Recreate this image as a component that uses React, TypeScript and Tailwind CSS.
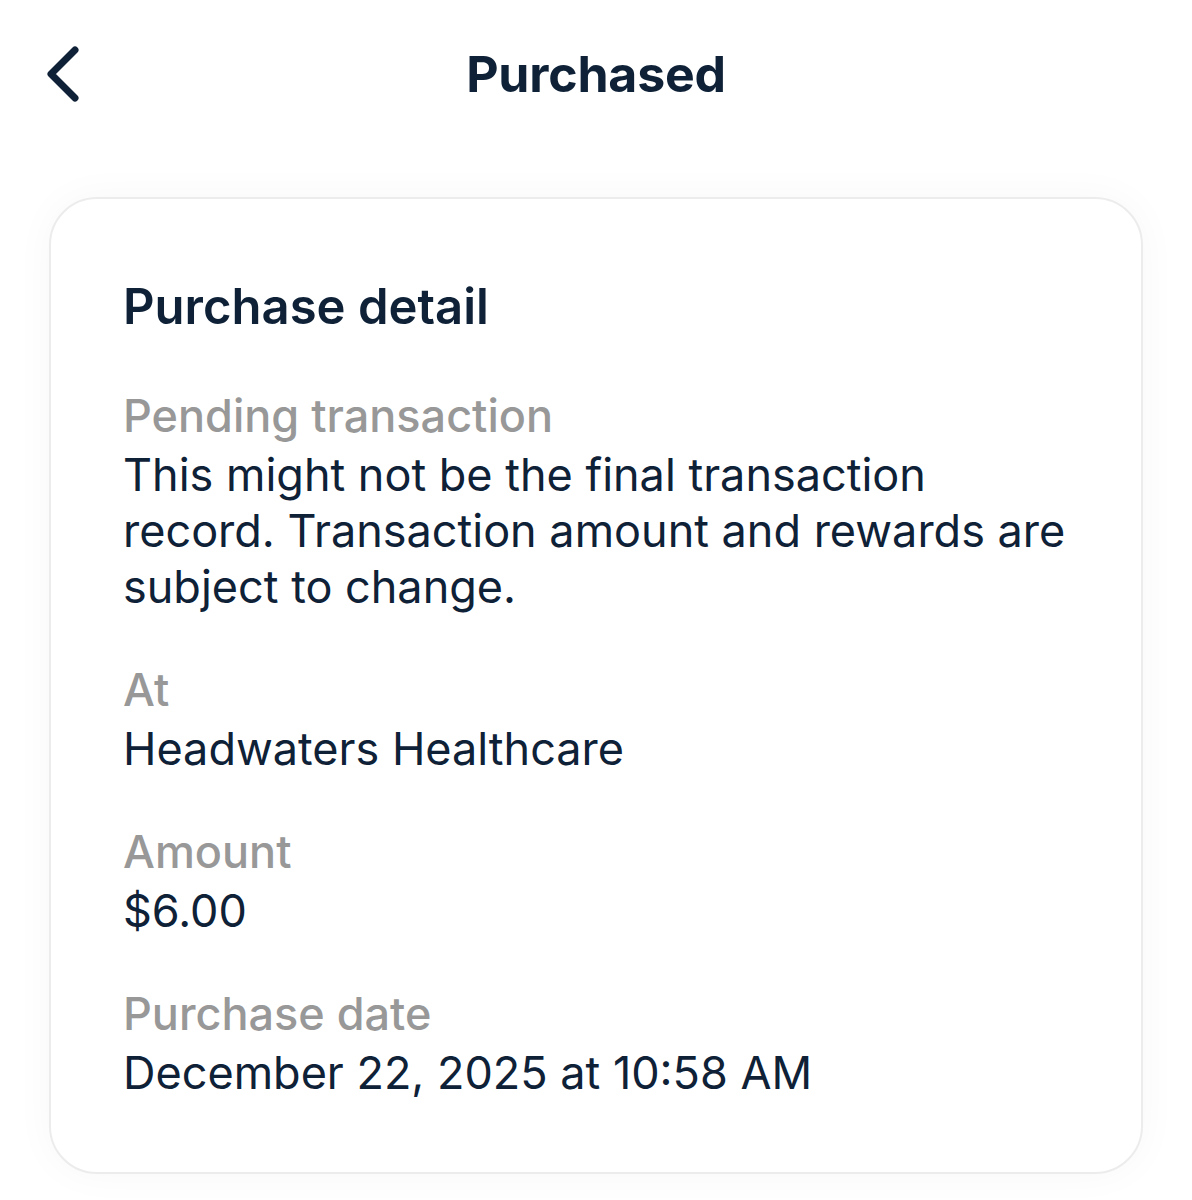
import React from "react";

const rows = [
  {
    label: "Pending transaction",
    value:
      "This might not be the final transaction record. Transaction amount and rewards are subject to change.",
  },
  { label: "At", value: "Headwaters Healthcare" },
  { label: "Amount", value: "$6.00" },
  { label: "Purchase date", value: "December 22, 2025 at 10:58 AM" },
];

export default function App() {
  return (
    <div
      className="min-h-[1200px] w-[1192px] bg-white text-[#0e2137]"
      style={{ fontFamily: "Inter, 'Noto Sans', sans-serif" }}
    >
      <header className="relative flex h-[150px] items-start justify-center pt-[42px]">
        <button className="absolute left-[41px] top-[39px] p-1" aria-label="Back">
          <svg width="40" height="64" viewBox="0 0 40 64" fill="none">
            <path
              d="M30 7 L6 31 L30 55"
              stroke="#0e2137"
              strokeWidth="7"
              strokeLinecap="round"
              strokeLinejoin="round"
            />
          </svg>
        </button>
        <h1 className="text-[50px] font-bold leading-[64px] tracking-[-0.2px]">Purchased</h1>
      </header>

      <div className="px-[49px] pt-[47px] pb-[28px]">
        <div className="rounded-[48px] border-2 border-[#ececec] bg-white pl-[72px] pr-[60px] pt-[80px] pb-[71px] shadow-[0_0_40px_rgba(0,0,0,0.035)]">
          <h2 className="text-[49px] font-semibold leading-[56px]">Purchase detail</h2>
          <div className="mt-[53px] flex flex-col gap-[47px]">
            {rows.map((r) => (
              <div key={r.label}>
                <p className="text-[45px] font-medium leading-[56px] text-[#989898]">
                  {r.label}
                </p>
                <p className="mt-[3px] text-[45px] leading-[56px]">{r.value}</p>
              </div>
            ))}
          </div>
        </div>
      </div>
    </div>
  );
}
